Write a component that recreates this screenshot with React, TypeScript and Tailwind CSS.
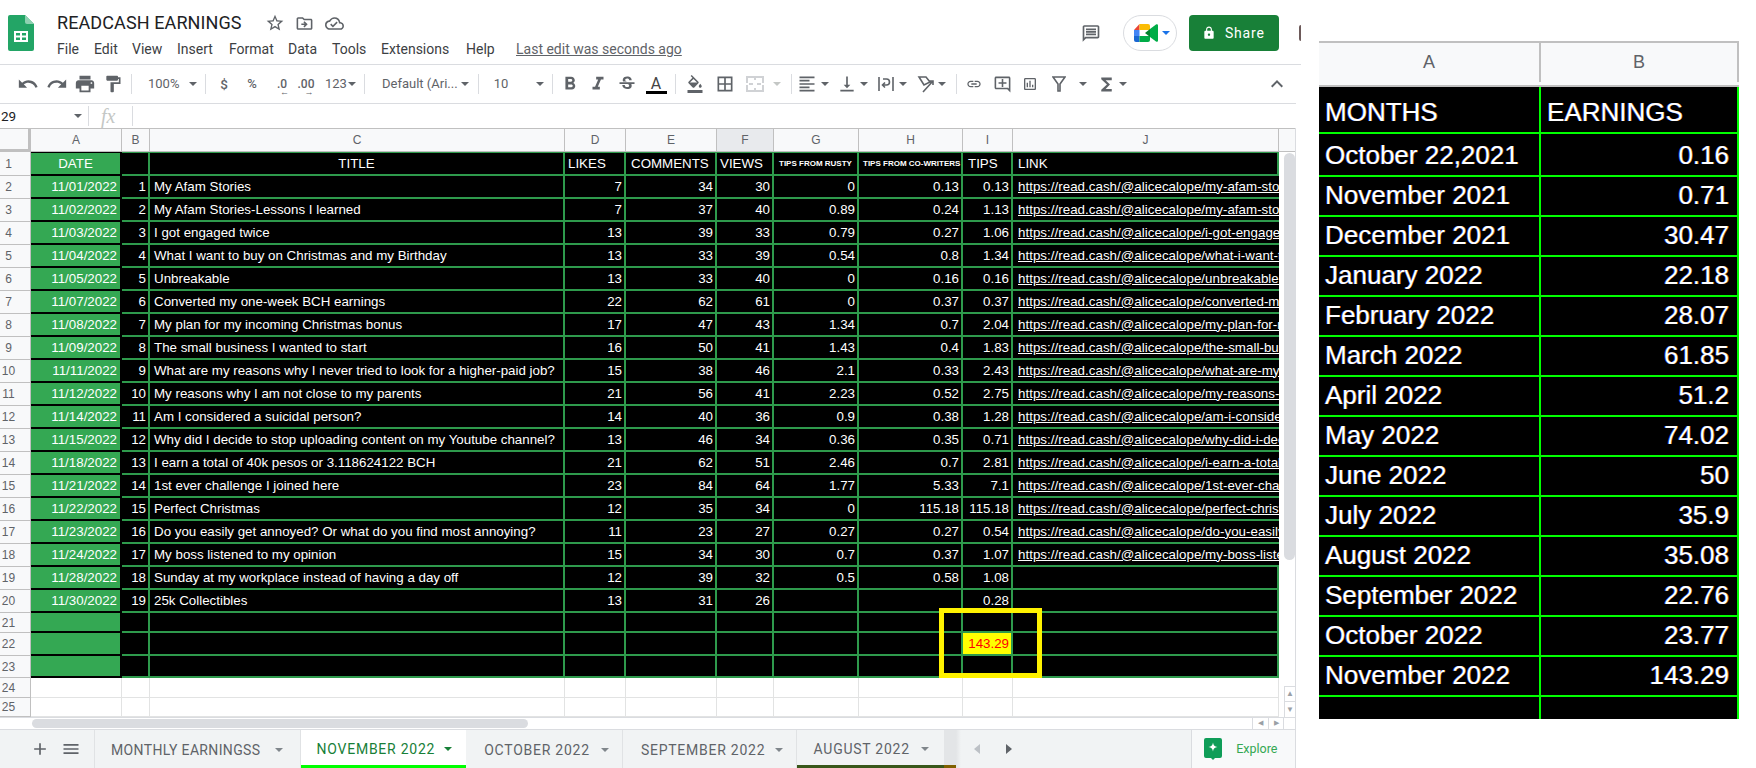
import React from "react";
import {
  MdUndo, MdRedo, MdPrint, MdFormatPaint, MdFormatBold, MdFormatItalic, MdStrikethroughS,
  MdFormatColorFill, MdBorderAll, MdFormatAlignLeft, MdVerticalAlignBottom, MdLink,
  MdOutlineAddComment, MdOutlineInsertChart, MdFunctions, MdExpandLess, MdStarBorder,
  MdOutlineDriveFileMove, MdOutlineCloudDone, MdOutlineMessage, MdLock, MdAdd, MdMenu,
} from "react-icons/md";

const Slot = ({ className = "", children }: { className?: string; children?: React.ReactNode }) => (
  <div className={"flex shrink-0 items-center justify-center " + className}>{children}</div>
);
const Caret = ({ className = "border-t-[#5f6368]" }: { className?: string }) => (
  <span className={"block h-0 w-0 border-x-[4px] border-t-[4px] border-x-transparent " + className} />
);
const Sep = ({ className = "" }: { className?: string }) => (
  <Slot className={className}><span className="block h-[20px] w-px bg-[#dadce0]" /></Slot>
);

const rows: [string, number, string, number, number, number, string, string, string, string][] = [
  ["11/01/2022", 1, "My Afam Stories", 7, 34, 30, "0", "0.13", "0.13", "my-afam-stories"],
  ["11/02/2022", 2, "My Afam Stories-Lessons I learned", 7, 37, 40, "0.89", "0.24", "1.13", "my-afam-stories-lessons"],
  ["11/03/2022", 3, "I got engaged twice", 13, 39, 33, "0.79", "0.27", "1.06", "i-got-engaged-twice"],
  ["11/04/2022", 4, "What I want to buy on Christmas and my Birthday", 13, 33, 39, "0.54", "0.8", "1.34", "what-i-want-to-buy"],
  ["11/05/2022", 5, "Unbreakable", 13, 33, 40, "0", "0.16", "0.16", "unbreakable-abc"],
  ["11/07/2022", 6, "Converted my one-week BCH earnings", 22, 62, 61, "0", "0.37", "0.37", "converted-my-one"],
  ["11/08/2022", 7, "My plan for my incoming Christmas bonus", 17, 47, 43, "1.34", "0.7", "2.04", "my-plan-for-my"],
  ["11/09/2022", 8, "The small business I wanted to start", 16, 50, 41, "1.43", "0.4", "1.83", "the-small-business"],
  ["11/11/2022", 9, "What are my reasons why I never tried to look for a higher-paid job?", 15, 38, 46, "2.1", "0.33", "2.43", "what-are-my-reasons"],
  ["11/12/2022", 10, "My reasons why I am not close to my parents", 21, 56, 41, "2.23", "0.52", "2.75", "my-reasons-why"],
  ["11/14/2022", 11, "Am I considered a suicidal person?", 14, 40, 36, "0.9", "0.38", "1.28", "am-i-considered"],
  ["11/15/2022", 12, "Why did I decide to stop uploading content on my Youtube channel?", 13, 46, 34, "0.36", "0.35", "0.71", "why-did-i-decide"],
  ["11/18/2022", 13, "I earn a total of 40k pesos or 3.118624122 BCH", 21, 62, 51, "2.46", "0.7", "2.81", "i-earn-a-total-of"],
  ["11/21/2022", 14, "1st ever challenge I joined here", 23, 84, 64, "1.77", "5.33", "7.1", "1st-ever-challenge"],
  ["11/22/2022", 15, "Perfect Christmas", 12, 35, 34, "0", "115.18", "115.18", "perfect-christmas"],
  ["11/23/2022", 16, "Do you easily get annoyed? Or what do you find most annoying?", 11, 23, 27, "0.27", "0.27", "0.54", "do-you-easily-get"],
  ["11/24/2022", 17, "My boss listened to my opinion", 15, 34, 30, "0.7", "0.37", "1.07", "my-boss-listened"],
  ["11/28/2022", 18, "Sunday at my workplace instead of having a day off", 12, 39, 32, "0.5", "0.58", "1.08", ""],
  ["11/30/2022", 19, "25k Collectibles", 13, 31, 26, "", "", "0.28", ""],
];

const GRID = "grid grid-cols-[31px_91px_28px_415px_61px_91px_57px_85px_104px_50px_266px]";
const cell = "flex items-center overflow-hidden whitespace-nowrap bg-black text-white border-r-2 border-b-2 border-[#2e9a4c] ";
const num = cell + "justify-end pr-[2px]";
const txt = cell + "pl-[4px]";
const head = cell + "border-t pl-[5px]";
const colA = "flex items-center justify-end whitespace-nowrap bg-[#34a853] text-white border-b-2 border-r-2 border-black pr-[3px] ";
const rowHead = "flex items-center border-r border-b border-[#c0c0c0] bg-[#f8f9fa] text-[12px] text-[#5f6368]";
const RowNum = ({ n }: { n: number }) => (
  <div className={rowHead}><span className="w-[17px] text-center">{n}</span></div>
);

const heads = ["A", "B", "C", "D", "E", "F", "G", "H", "I", "J"];

const months: [string, string, string, string][] = [
  ["October 22,2021", "0.16", "h-[44px]", "pt-[4px]"],
  ["November 2021", "0.71", "h-[40px]", ""],
  ["December 2021", "30.47", "h-[40px]", ""],
  ["January 2022", "22.18", "h-[40px]", ""],
  ["February 2022", "28.07", "h-[40px]", ""],
  ["March 2022", "61.85", "h-[40px]", ""],
  ["April 2022", "51.2", "h-[40px]", ""],
  ["May 2022", "74.02", "h-[40px]", ""],
  ["June 2022", "50", "h-[40px]", ""],
  ["July 2022", "35.9", "h-[40px]", ""],
  ["August 2022", "35.08", "h-[40px]", ""],
  ["September 2022", "22.76", "h-[40px]", ""],
  ["October 2022", "23.77", "h-[40px]", ""],
  ["November 2022", "143.29", "h-[39px]", ""],
];

const MENU: [string, string][] = [
  ["File", "w-[37px]"], ["Edit", "w-[38px]"], ["View", "w-[45px]"], ["Insert", "w-[52px]"],
  ["Format", "w-[59px]"], ["Data", "w-[44px]"], ["Tools", "w-[49px]"], ["Extensions", "w-[85px]"], ["Help", "w-[50px]"],
];

const fringe = "[text-shadow:-0.6px_0_0_rgba(40,80,255,0.8),0.6px_0_0_rgba(220,140,0,0.8)]";

function SheetsLogo() {
  return (
    <svg width="26" height="36" viewBox="0 0 26 36">
      <path d="M2 0h15l9 9v25a2 2 0 0 1-2 2H2a2 2 0 0 1-2-2V2a2 2 0 0 1 2-2z" fill="#23a566" />
      <path d="M17 0l9 9h-7a2 2 0 0 1-2-2z" fill="#8ed1b1" />
      <path d="M6 16h14v11H6zm2 2v2.5h4V18zm6 0v2.5h4V18zm-6 4.5V25h4v-2.5zm6 0V25h4v-2.5z" fill="#fff" fillRule="evenodd" />
    </svg>
  );
}

function MeetLogo() {
  return (
    <svg width="24" height="18" viewBox="0 0 24 18">
      <path d="M0 6L5.5 0v6z" fill="#ea4335" />
      <path d="M5.5 0H14a2 2 0 0 1 2 2v4H5.5z" fill="#fbbc04" />
      <path d="M0 6h5.5v6H0z" fill="#4285f4" />
      <path d="M0 12h5.5v6H2a2 2 0 0 1-2-2z" fill="#1967d2" />
      <path d="M5.5 12H16v4a2 2 0 0 1-2 2H5.5z" fill="#00ac47" />
      <path d="M11 9l5-4v8z" fill="#00832d" />
      <path d="M16 5l6-4.5c1-.6 2 0 2 1v15c0 1-1 1.600-2 1l-6-4.500z" fill="#00ac47" />
    </svg>
  );
}

export default function App() {
  return (
    <div className="flex h-[768px] w-[1756px] overflow-hidden bg-white font-['Roboto',sans-serif] text-[#3c4043]">
      <div className="flex w-[1301px] shrink-0 flex-col">
        {/* title bar */}
        <div className="flex h-[65px] shrink-0 border-b border-[#dadce0]">
          <div className="ml-[8px] mt-[15px]"><SheetsLogo /></div>
          <div className="ml-[23px] flex w-[700px] flex-col">
            <div className="mt-[11px] flex h-[24px] items-center">
              <span className="text-[18px] leading-[24px] tracking-[0.1px] text-[#202124]">READCASH EARNINGS</span>
              <Slot className="ml-[23px] w-[20px]"><MdStarBorder size={20} color="#5f6368" /></Slot>
              <Slot className="ml-[10px] w-[20px]"><MdOutlineDriveFileMove size={19} color="#5f6368" /></Slot>
              <Slot className="ml-[10px] w-[20px]"><MdOutlineCloudDone size={19} color="#5f6368" /></Slot>
            </div>
            <div className="mt-[4px] flex h-[20px] items-center text-[14px] text-[#3c4043]">
              {MENU.map(([m, w]) => (
                <span key={m} className={w}>{m}</span>
              ))}
              <span className="text-[14px] text-[#5f6368] underline">Last edit was seconds ago</span>
            </div>
          </div>
          <div className="ml-[325px] mt-[15px] flex h-[36px]">
            <Slot className="w-[20px]"><MdOutlineMessage size={27} color="#5f6368" /></Slot>
            <div className="ml-[22px] flex h-[36px] w-[54px] items-center rounded-full border border-[#dadce0] pl-[10px]">
              <MeetLogo />
              <Caret className="ml-[4px] border-t-[#1a73e8]" />
            </div>
            <div className="ml-[12px] flex h-[36px] w-[90px] items-center rounded-[4px] bg-[#188038] pl-[13px] text-[14px] font-normal tracking-[0.8px] text-white">
              <MdLock size={14} color="#fff" />
              <span className="ml-[9px]">Share</span>
            </div>
            <div className="ml-[20px] mt-[10px] h-[16px] w-[2px] rounded-l-full bg-[#6d5a5a]" />
          </div>
        </div>

        {/* toolbar */}
        <div className="flex h-[39px] w-[1296px] shrink-0 items-center border-b border-[#dadce0] pl-[14px] text-[#5f6368]">
          <Slot className="w-[28px]"><MdUndo size={22} /></Slot>
          <Slot className="w-[30px]"><MdRedo size={22} /></Slot>
          <Slot className="w-[26px]"><MdPrint size={22} /></Slot>
          <Slot className="w-[30px]"><MdFormatPaint size={20} /></Slot>
          <Sep className="w-[6px]" />
          <Slot className="w-[48px] justify-start pl-[14px] text-[13px]">100%</Slot>
          <Slot className="w-[22px]"><Caret /></Slot>
          <Sep className="w-[2px]" />
          <Slot className="ml-[8px] w-[20px] text-[13.5px] font-medium">$</Slot>
          <Slot className="w-[36px] text-[13px] font-medium">%</Slot>
          <Slot className="w-[24px]">
            <span className="relative text-[12px] font-medium">.0
              <span className="absolute left-[3px] top-[13px] text-[9px] leading-[9px]">←</span>
            </span>
          </Slot>
          <Slot className="w-[24px]">
            <span className="relative text-[12px] font-medium">.00
              <span className="absolute left-[7px] top-[13px] text-[9px] leading-[9px]">→</span>
            </span>
          </Slot>
          <Slot className="w-[40px] justify-start pl-[7px] text-[13px]">123<Caret className="ml-[1px] border-t-[#5f6368]" /></Slot>
          <Sep className="w-[12px]" />
          <Slot className="w-[88px] justify-start pl-[12px] text-[13px]">Default (Ari...</Slot>
          <Slot className="w-[14px]"><Caret /></Slot>
          <Sep className="w-[12px]" />
          <Slot className="w-[34px] text-[13px]">10</Slot>
          <Slot className="ml-[12px] w-[20px]"><Caret /></Slot>
          <Sep className="w-[4px]" />
          <Slot className="w-[32px]"><MdFormatBold size={22} /></Slot>
          <Slot className="w-[24px]"><MdFormatItalic size={22} /></Slot>
          <Slot className="w-[34px]"><MdStrikethroughS size={20} /></Slot>
          <Slot className="relative w-[24px]">
            <span className="text-[16px] leading-[16px] text-[#444]">A</span>
            <span className="absolute left-[2px] top-[15px] h-[3px] w-[21px] bg-black" />
          </Slot>
          <Sep className="w-[14px]" />
          <Slot className="w-[26px]"><MdFormatColorFill size={18} /></Slot>
          <Slot className="w-[34px]"><MdBorderAll size={20} /></Slot>
          <Slot className="w-[26px]">
            <svg width="18" height="16" viewBox="0 0 18 16" fill="none" stroke="#d0d2d5" strokeWidth="2">
              <path d="M1 7V1h16v6M1 9v6h16V9M9 1v3M9 12v3M3 8h4M11 8h4" />
            </svg>
          </Slot>
          <Slot className="w-[18px]"><Caret className="border-t-[#c4c7c5]" /></Slot>
          <Sep className="w-[10px]" />
          <Slot className="w-[22px]"><MdFormatAlignLeft size={20} /></Slot>
          <Slot className="w-[14px]"><Caret /></Slot>
          <Slot className="ml-[4px] w-[22px]"><MdVerticalAlignBottom size={20} /></Slot>
          <Slot className="w-[12px]"><Caret /></Slot>
          <Slot className="ml-[6px] w-[20px]">
            <svg width="16" height="16" viewBox="0 0 16 16" fill="none" stroke="#5f6368" strokeWidth="1.6">
              <path d="M1 1v14M15 1v14M5 3h3.500a3 3 0 0 1 0 6H5M7 6.500L4.500 9 7 11.500" />
            </svg>
          </Slot>
          <Slot className="w-[14px]"><Caret /></Slot>
          <Slot className="ml-[4px] w-[24px]">
            <svg width="18" height="18" viewBox="0 0 18 18" fill="none" stroke="#5f6368" strokeWidth="1.600">
              <path d="M2 2h7l4 5-6 3zM16 6L6 17M12 6h4v4" />
            </svg>
          </Slot>
          <Slot className="w-[8px]"><Caret /></Slot>
          <Sep className="w-[20px]" />
          <Slot className="w-[16px]"><MdLink size={22} /></Slot>
          <Slot className="w-[40px]"><MdOutlineAddComment size={19} /></Slot>
          <Slot className="w-[16px]"><MdOutlineInsertChart size={22} /></Slot>
          <Slot className="ml-[10px] w-[22px]">
            <svg width="14" height="16" viewBox="0 0 14 16" fill="none" stroke="#5f6368" strokeWidth="1.600">
              <path d="M1 1h12L8 8v7H6V8z" />
            </svg>
          </Slot>
          <Slot className="ml-[6px] w-[14px]"><Caret /></Slot>
          <Slot className="ml-[1px] w-[30px]"><MdFunctions size={21} /></Slot>
          <Slot className="w-[4px]"><Caret /></Slot>
          <Slot className="ml-auto mr-[7px] w-[24px]"><MdExpandLess size={24} /></Slot>
        </div>

        {/* formula bar */}
        <div className="flex h-[24px] w-[1296px] shrink-0 items-center text-[13.5px] text-[#202124]">
          <span className="w-[74px] pl-[1px]">29</span>
          <Caret />
          <span className="ml-[6px] block h-[20px] w-px bg-[#dadce0]" />
          <span className="ml-[12px] w-[31px] font-['Liberation_Serif',serif] text-[20px] italic leading-[20px] text-[#c4c7c5]">fx</span>
          <span className="block h-[20px] w-px bg-[#dadce0]" />
        </div>

        {/* sheet */}
        <div className="flex w-[1296px] shrink-0 border-r border-[#dadce0] font-['Liberation_Sans',sans-serif] text-[13.33px]">
          <div className="relative w-[1279px] shrink-0">
            <div className={GRID + " h-[24px] border-t border-[#c0c0c0] text-[12px] text-[#5f6368]"}>
              <div className="border-b-[3px] border-r-[3px] border-[#c0c0c0] bg-[#f8f9fa]" />
              {heads.map((h) => (
                <div key={h} className={"flex items-center justify-center border-b border-r border-[#c0c0c0] " + (h === "F" ? "bg-[#e8eaed]" : "bg-[#f8f9fa]")}>{h}</div>
              ))}
            </div>

            <div className={GRID + " h-[24px]"}>
              <RowNum n={1} />
              <div className="flex items-center justify-center border-b-2 border-r-2 border-t border-black bg-[#34a853] text-white">DATE</div>
              <div className={cell + "border-t"} />
              <div className={cell + "justify-center border-t"}>TITLE</div>
              <div className={cell + "border-t pl-[3px]"}>LIKES</div>
              <div className={head}>COMMENTS</div>
              <div className={cell + "border-t pl-[3px]"}>VIEWS</div>
              <div className={head + " text-[8px] font-bold"}>TIPS FROM RUSTY</div>
              <div className={cell + "border-t pl-[4px] text-[8px] font-bold"}>TIPS FROM CO-WRITERS</div>
              <div className={head}>TIPS</div>
              <div className={head}>LINK</div>
            </div>

            {rows.map((r, i) => (
              <div key={i} className={GRID + " h-[23px]"}>
                <RowNum n={i + 2} />
                <div className={colA}>{r[0]}</div>
                <div className={num}>{r[1]}</div>
                <div className={txt}>{r[2]}</div>
                <div className={num}>{r[3]}</div>
                <div className={num}>{r[4]}</div>
                <div className={num}>{r[5]}</div>
                <div className={num}>{r[6]}</div>
                <div className={num}>{r[7]}</div>
                <div className={num}>{r[8]}</div>
                {r[9] ? (
                  <div className="flex items-center overflow-hidden whitespace-nowrap border-b-2 border-[#2e9a4c] bg-black pl-[5px] tracking-[0.03px] text-white underline">
                    {"https://read.cash/@alicecalope/" + r[9]}
                  </div>
                ) : (
                  <div className={txt} />
                )}
              </div>
            ))}

            {["h-[20px]", "h-[23px]", "h-[22px]"].map((h, i) => (
              <div key={h} className={GRID + " " + h}>
                <RowNum n={i + 21} />
                <div className={colA} />
                <div className={num} />
                <div className={txt} />
                <div className={num} />
                <div className={num} />
                <div className={num} />
                <div className={num} />
                <div className={num} />
                {i === 1 ? (
                  <div className="flex items-center justify-end border-b-2 border-r-2 border-[#2e9a4c] bg-[#ffff00] pr-[2px] text-[#ff0000]">143.29</div>
                ) : (
                  <div className={num} />
                )}
                <div className={txt} />
              </div>
            ))}

            {["h-[20px]", "h-[19px]"].map((h, i) => (
              <div key={h} className={GRID + " " + h}>
                <RowNum n={i + 24} />
                {heads.map((c) => (
                  <div key={c} className="border-b border-r border-[#e2e3e3] bg-white" />
                ))}
              </div>
            ))}

            <div className="absolute left-[939px] top-[480px] h-[70px] w-[103px] border-[5px] border-[#fff200]" />
          </div>

          {/* vertical scrollbar */}
          <div className="flex w-[16px] shrink-0 flex-col">
            <div className="h-[24px] border-b border-t border-[#c0c0c0] bg-[#f8f9fa]" />
            <div className="flex flex-1 flex-col pl-[5px]">
              <div className="mt-[1px] h-[407px] w-[11px] rounded-full bg-[#dadce0]" />
              <div className="mt-auto flex h-[16px] items-center justify-center border-y border-l border-[#dadce0] text-[8px] text-[#9aa0a6]">▲</div>
              <div className="flex h-[15px] items-center justify-center border-l border-[#dadce0] text-[8px] text-[#9aa0a6]">▼</div>
            </div>
          </div>
        </div>

        {/* horizontal scrollbar */}
        <div className="flex h-[12px] w-[1296px] shrink-0 items-center border-r border-t border-[#dadce0] bg-white pl-[32px]">
          <div className="h-[9px] w-[496px] rounded-full bg-[#dadce0]" />
          <div className="ml-[724px] flex h-full w-[16px] items-center justify-center border-l border-[#dadce0] text-[7px] text-[#9aa0a6]">◀</div>
          <div className="flex h-full w-[16px] items-center justify-center border-x border-[#dadce0] text-[7px] text-[#9aa0a6]">▶</div>
        </div>

        {/* tabs */}
        <div className="flex h-[39px] w-[1296px] shrink-0 border-r border-t border-[#dadce0] bg-[#f1f3f4] text-[14px] font-normal text-[#5f6368]">
          <Slot className="ml-[28px] w-[24px]"><MdAdd size={20} /></Slot>
          <Slot className="ml-[7px] w-[24px]"><MdMenu size={20} /></Slot>
          <div className="ml-[11px] flex w-[207px] items-center border-x border-[#e0e2e4] pl-[16px] pt-[2px] tracking-[0.35px]">
            MONTHLY EARNINGSS<Caret className="ml-[15px] border-t-[#80868b]" />
          </div>
          <div className="flex w-[166px] items-center border-b-[3px] border-[#00ff00] bg-white pl-[16px] pt-[3px] tracking-[0.75px] text-[#188038]">
            NOVEMBER 2022<Caret className="ml-[9px] border-t-[#188038]" />
          </div>
          <div className="flex w-[157px] items-center border-r border-[#e0e2e4] pl-[18px] pt-[2px] tracking-[0.75px]">
            OCTOBER 2022<Caret className="ml-[11px] border-t-[#80868b]" />
          </div>
          <div className="flex w-[174px] items-center border-r border-[#e0e2e4] pl-[18px] pt-[2px] tracking-[0.75px]">
            SEPTEMBER 2022<Caret className="ml-[10px] border-t-[#80868b]" />
          </div>
          <div className="flex w-[148px] items-center border-b-[3px] border-[#38571a] pl-[17px] pt-[3px] tracking-[0.75px]">
            AUGUST 2022<Caret className="ml-[11px] border-t-[#80868b]" />
          </div>
          <div className="h-full w-[12px] border-b-[3px] border-[#7f6000] bg-[#e3e5e7]" />
          <div className="h-full w-[5px] bg-gradient-to-r from-[#e3e5e7] to-[#f1f3f4]" />
          <Slot className="ml-[10px] w-[12px]"><span className="block h-0 w-0 border-y-[5px] border-r-[6px] border-y-transparent border-r-[#bdc1c6]" /></Slot>
          <Slot className="ml-[20px] w-[12px]"><span className="block h-0 w-0 border-y-[5px] border-l-[6px] border-y-transparent border-l-[#5f6368]" /></Slot>
          <div className="ml-[176px] flex w-[104px] items-center border-l border-[#dadce0] bg-[#f8f9fa] pl-[12px] text-[#34a853]">
            <svg width="18" height="22" viewBox="0 0 18 22">
              <path d="M2 0h14a2 2 0 0 1 2 2v16a2 2 0 0 1-2 2h-5l-2 2-2-2H2a2 2 0 0 1-2-2V2a2 2 0 0 1 2-2z" fill="#0f9d58" />
              <path d="M9 4.500c.6 3 1.500 3.900 4.500 4.500-3 .6-3.900 1.500-4.500 4.500C8.400 10.500 7.500 9.600 4.500 9 7.500 8.400 8.400 7.500 9 4.500z" fill="#fff" />
            </svg>
            <span className="ml-[14px] text-[12.5px]">Explore</span>
          </div>
        </div>
      </div>

      {/* pasted earnings picture */}
      <div className={"ml-[18px] mt-[41px] h-[678px] w-[420px] shrink-0 font-['Liberation_Sans',sans-serif] text-white " + fringe}>
        <div className="grid h-[46px] grid-cols-[222px_198px] border-y-2 border-[#c0c0c0] bg-[#f8f9fa] pb-[3px] text-[18px] text-[#5f6368] [text-shadow:none]">
          <div className="flex items-center justify-center border-r-2 border-[#c0c0c0]">A</div>
          <div className="flex items-center justify-center border-r-2 border-[#c0c0c0]">B</div>
        </div>
        <div className="bg-black text-[26px]">
          <div className="grid h-[45px] grid-cols-[222px_198px]">
            <div className="flex items-center border-b-2 border-r-2 border-[#00ff00] pl-[6px] pt-[6px]">MONTHS</div>
            <div className="flex items-center border-b-2 border-r-2 border-[#00ff00] pl-[6px] pt-[6px]">EARNINGS</div>
          </div>
          {months.map(([m, v, h, p]) => (
            <div key={m} className={"grid grid-cols-[222px_198px] " + h}>
              <div className={"flex items-center border-b-2 border-r-2 border-[#00ff00] pl-[6px] " + p}>{m}</div>
              <div className={"flex items-center justify-end border-b-2 border-r-2 border-[#00ff00] pr-[8px] " + p}>{v}</div>
            </div>
          ))}
          <div className="grid h-[24px] grid-cols-[222px_198px]">
            <div className="border-r-2 border-[#00ff00]" />
            <div className="border-r-2 border-[#00ff00]" />
          </div>
        </div>
      </div>
    </div>
  );
}
